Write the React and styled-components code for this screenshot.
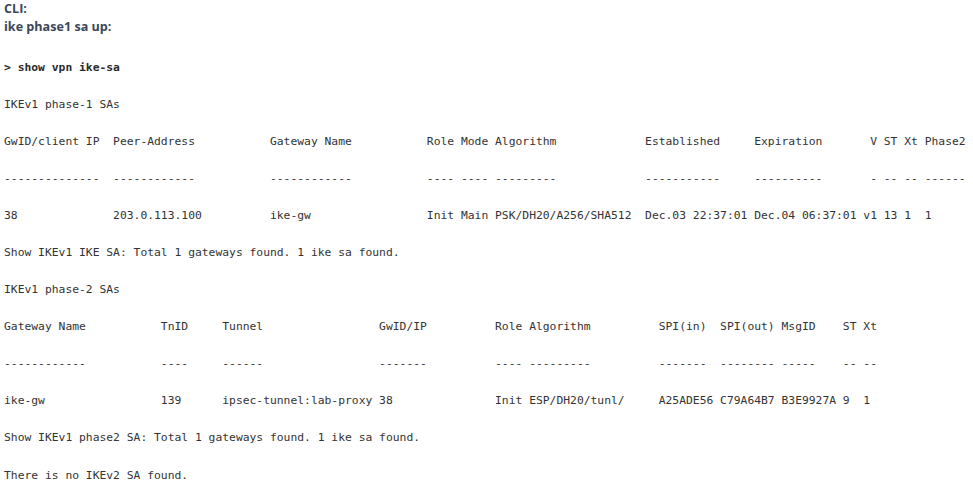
import React from "react";
import styled, { createGlobalStyle } from "styled-components";

const Global = createGlobalStyle`
  html, body { margin: 0; padding: 0; background: #ffffff; }
  #root { width: 973px; min-height: 485px; }
`;

const Page = styled.div`
  display: flex;
  flex-direction: column;
  padding: 0 0 0 4px;
  background: #ffffff;
`;

const Heading = styled.div`
  font-family: "Open Sans", Lato, sans-serif;
  font-weight: 700;
  font-size: 12.6px;
  line-height: 18px;
  color: #3b4759;
`;

const Terminal = styled.div`
  display: flex;
  flex-direction: column;
  margin-top: 12.5px;
`;

const Line = styled.div`
  font-family: "DejaVu Sans Mono", "Liberation Mono", monospace;
  font-size: 11.33px;
  line-height: 37.1px;
  height: 37.1px;
  white-space: pre;
  color: ${(p) => (p.$bold ? "#2a2a2a" : "#333333")};
  font-weight: ${(p) => (p.$bold ? 700 : 400)};
`;

const lines = [
  { t: "> show vpn ike-sa", b: true },
  { t: "IKEv1 phase-1 SAs" },
  {
    t: "GwID/client IP  Peer-Address           Gateway Name           Role Mode Algorithm             Established     Expiration       V ST Xt Phase2",
  },
  {
    t: "--------------  ------------           ------------           ---- ---- ---------             -----------     ----------       - -- -- ------",
  },
  {
    t: "38              203.0.113.100          ike-gw                 Init Main PSK/DH20/A256/SHA512  Dec.03 22:37:01 Dec.04 06:37:01 v1 13 1  1",
  },
  { t: "Show IKEv1 IKE SA: Total 1 gateways found. 1 ike sa found." },
  { t: "IKEv1 phase-2 SAs" },
  {
    t: "Gateway Name           TnID     Tunnel                 GwID/IP          Role Algorithm          SPI(in)  SPI(out) MsgID    ST Xt",
  },
  {
    t: "------------           ----     ------                 -------          ---- ---------          -------  -------- -----    -- --",
  },
  {
    t: "ike-gw                 139      ipsec-tunnel:lab-proxy 38               Init ESP/DH20/tunl/     A25ADE56 C79A64B7 B3E9927A 9  1",
  },
  { t: "Show IKEv1 phase2 SA: Total 1 gateways found. 1 ike sa found." },
  { t: "There is no IKEv2 SA found." },
];

export default function App() {
  return (
    <>
      <Global />
      <Page>
        <Heading>CLI:</Heading>
        <Heading>ike phase1 sa up:</Heading>
        <Terminal>
          {lines.map((l, i) => (
            <Line key={i} $bold={l.b}>
              {l.t}
            </Line>
          ))}
        </Terminal>
      </Page>
    </>
  );
}
